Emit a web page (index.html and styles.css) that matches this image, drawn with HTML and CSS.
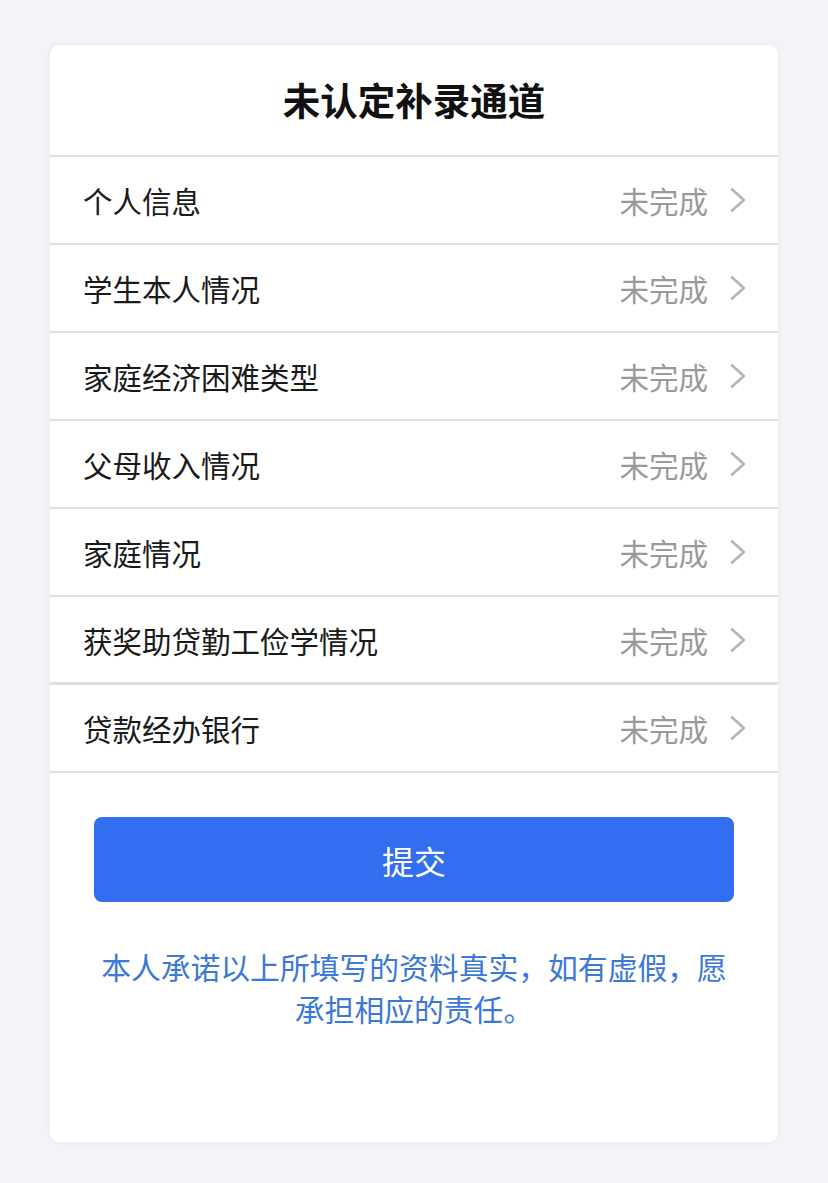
FILE: index.html
```html
<!DOCTYPE html>
<html lang="zh">
<head>
<meta charset="utf-8">
<title>未认定补录通道</title>
<link rel="stylesheet" href="styles.css">
</head>
<body>
<div class="page">
  <div class="card">
    <div class="card-header">未认定补录通道</div>
    <ul class="list">
      <li class="row"><span class="label">个人信息</span><span class="status">未完成</span><svg class="chev" viewBox="0 0 16 24"><path d="M3 3 L13 12 L3 21" /></svg></li>
      <li class="row"><span class="label">学生本人情况</span><span class="status">未完成</span><svg class="chev" viewBox="0 0 16 24"><path d="M3 3 L13 12 L3 21" /></svg></li>
      <li class="row"><span class="label">家庭经济困难类型</span><span class="status">未完成</span><svg class="chev" viewBox="0 0 16 24"><path d="M3 3 L13 12 L3 21" /></svg></li>
      <li class="row"><span class="label">父母收入情况</span><span class="status">未完成</span><svg class="chev" viewBox="0 0 16 24"><path d="M3 3 L13 12 L3 21" /></svg></li>
      <li class="row"><span class="label">家庭情况</span><span class="status">未完成</span><svg class="chev" viewBox="0 0 16 24"><path d="M3 3 L13 12 L3 21" /></svg></li>
      <li class="row row-thick"><span class="label">获奖助贷勤工俭学情况</span><span class="status">未完成</span><svg class="chev" viewBox="0 0 16 24"><path d="M3 3 L13 12 L3 21" /></svg></li>
      <li class="row"><span class="label">贷款经办银行</span><span class="status">未完成</span><svg class="chev" viewBox="0 0 16 24"><path d="M3 3 L13 12 L3 21" /></svg></li>
    </ul>
    <div class="actions">
      <button class="submit" type="button">提交</button>
      <p class="notice">本人承诺以上所填写的资料真实，如有虚假，愿承担相应的责任。</p>
    </div>
  </div>
</div>
</body>
</html>
```

FILE: styles.css
```css
* { box-sizing: border-box; }
html, body {
  margin: 0;
  padding: 0;
  background: #f3f4f8;
  font-family: "Noto Sans CJK SC", "Noto Sans", sans-serif;
}
.page {
  padding: 45px 50px 41px 50px;
}
.card {
  background: #ffffff;
  border-radius: 9px;
  box-shadow: 0 0 6px rgba(0, 0, 0, 0.06);
  height: 1097px;
  overflow: hidden;
}
.card-header {
  height: 112px;
  display: flex;
  align-items: center;
  justify-content: center;
  font-size: 37.5px;
  font-weight: 700;
  color: #111;
  border-bottom: 2px solid #dedede;
  padding-bottom: 4px;
}
.list {
  list-style: none;
  margin: 0;
  padding: 0;
}
.row {
  height: 88px;
  display: flex;
  align-items: center;
  padding: 0 30px 0 33px;
  border-bottom: 2px solid #dedede;
}
.row-thick { border-bottom-width: 3px; }
.label {
  flex: 1;
  font-size: 29.5px;
  color: #1a1a1a;
}
.status {
  font-size: 29.5px;
  color: #9a9a9a;
  margin-right: 20px;
}
.chev {
  width: 20px;
  height: 28px;
  fill: none;
  stroke: #b5b5b5;
  stroke-width: 2.4;
  stroke-linecap: round;
  stroke-linejoin: round;
}
.actions {
  padding: 44px 44px 0 44px;
}
.submit {
  display: block;
  width: 100%;
  height: 85px;
  border: none;
  border-radius: 8px;
  background: #316ff0;
  color: #ffffff;
  font-family: "Noto Sans CJK SC", "Noto Sans", sans-serif;
  font-size: 32px;
}
.notice {
  margin: 43px 0 0 0;
  text-align: center;
  font-size: 29.8px;
  line-height: 42px;
  color: #3b78d8;
}
```
